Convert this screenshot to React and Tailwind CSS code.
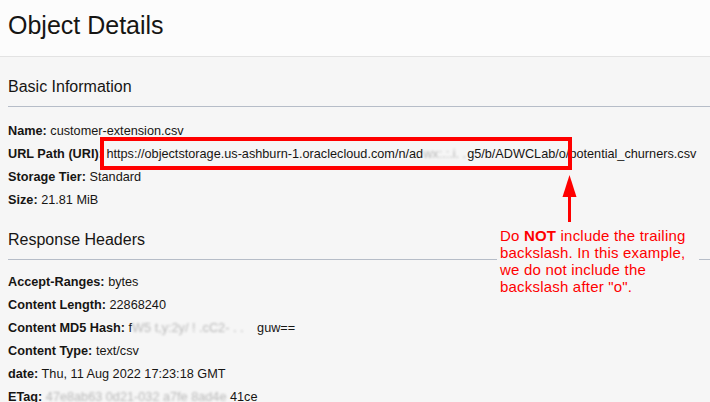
const basicRows = [
  { label: 'Name:', value: 'customer-extension.csv' },
  { label: 'URL Path (URI):', value: 'url' },
  { label: 'Storage Tier:', value: 'Standard' },
  { label: 'Size:', value: '21.81 MiB' },
]

function Blurred({ children, className = '' }) {
  return <span className={`inline-block text-[#b9b9b9] blur-[0.8px] ${className}`}>{children}</span>
}

function UrlValue() {
  return (
    <span>
      https://objectstorage.us-ashburn-1.oraclecloud.com/n/ad
      <Blurred className="w-[44px] overflow-hidden whitespace-nowrap align-top">wx:.:.i. .:</Blurred>
      g5/b/ADWCLab/o/potential_churners.csv
    </span>
  )
}

function Row({ label, children }) {
  return (
    <div className="whitespace-nowrap">
      <span className="font-bold">{label}</span> {children}
    </div>
  )
}

function SectionTitle({ children, className = '' }) {
  return (
    <h2 className={`ml-2 border-b border-[#b6bdc8] pb-[9px] text-[16px] leading-[20px] font-normal ${className}`}>
      {children}
    </h2>
  )
}

export default function App() {
  return (
    <div className="relative h-[402px] w-[710px] overflow-hidden bg-[#f6f6f6] font-['Liberation_Sans',Arial,sans-serif] text-[#161513]">
      <header className="h-[57px] border-b border-[#e3e3e3] bg-[#fcfcfc] px-2 pt-[10px]">
        <h1 className="text-[25px] leading-[30px] font-normal">Object Details</h1>
      </header>

      <SectionTitle className="mt-[20px]">Basic Information</SectionTitle>
      <div className="px-2 pt-[13px] text-[12.7px] leading-[23px]">
        {basicRows.map((row) => (
          <Row key={row.label} label={row.label}>
            {row.value === 'url' ? <UrlValue /> : row.value}
          </Row>
        ))}
      </div>

      <SectionTitle className="mt-[18px]">Response Headers</SectionTitle>
      <div className="px-2 pt-[11px] text-[12.7px] leading-[23px]">
        <Row label="Accept-Ranges:">bytes</Row>
        <Row label="Content Length:">22868240</Row>
        <Row label="Content MD5 Hash:">
          f<Blurred className="w-[125px] overflow-hidden whitespace-nowrap align-top">W5 t,y:2y/ ! .cC2- .  .</Blurred>guw==
        </Row>
        <Row label="Content Type:">text/csv</Row>
        <Row label="date:">Thu, 11 Aug 2022 17:23:18 GMT</Row>
        <Row label="ETag:">
          <Blurred className="text-[#8a8a8a]">47e8ab63 0d21 </Blurred>
          <Blurred> -032 a7fe 8ad4e </Blurred> 41ce
        </Row>
      </div>

      {/* annotation overlay */}
      <div className="absolute left-[100px] top-[137px] h-[33px] w-[472px] border-[4px] border-[#ff0000]" />
      <svg className="absolute left-[560px] top-[175px]" width="18" height="48" viewBox="0 0 18 48">
        <polygon points="9.5,0 2.5,22 16.5,22" fill="#ff0000" />
        <rect x="8" y="20" width="3" height="27" fill="#ff0000" />
      </svg>
      <div className="absolute left-[497px] top-[227px] w-[202px] whitespace-nowrap bg-[#f6f6f6] pl-[3px] text-[15px] leading-[17px] tracking-[0.2px] text-[#ff0000]">
        Do <span className="font-bold">NOT</span> include the trailing
        <br />
        backslash. In this example,
        <br />
        we do not include the
        <br />
        backslash after "o".
      </div>
    </div>
  )
}
